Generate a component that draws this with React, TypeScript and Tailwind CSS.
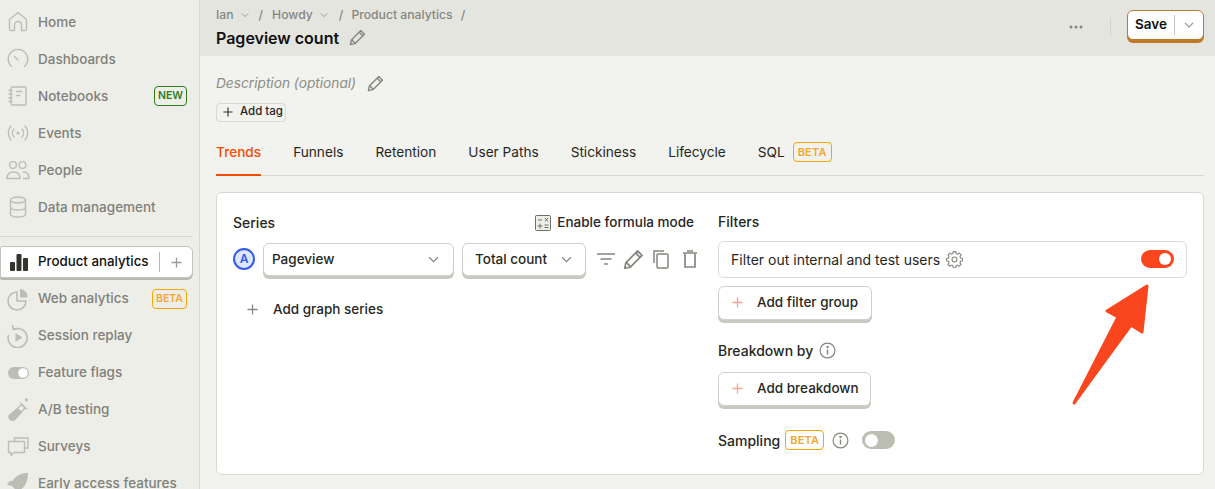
import React from "react";

const S = ({ children, size = 24, className = "text-[#bcbdb3]" }: any) => (
  <svg width={size} height={size} viewBox="0 0 24 24" fill="none" stroke="currentColor" strokeWidth={1.4} strokeLinecap="round" strokeLinejoin="round" className={`shrink-0 ${className}`}>
    {children}
  </svg>
);

const Pencil = ({ className = "", size = 18 }: any) => (
  <svg width={size} height={size} viewBox="0 0 18 18" fill="none" stroke="currentColor" strokeWidth={1.5} strokeLinejoin="round" className={`shrink-0 ${className}`}>
    <path d="M1.500 16.500l1-4.800L12.500 1.700 16.300 5.500 6.300 15.500z" />
    <path d="M10.800 3.400l3.800 3.800M2.800 11.500l3.700 3.700" />
  </svg>
);

const Plus = ({ className = "", size = 12 }: any) => (
  <svg width={size} height={size} viewBox="0 0 12 12" stroke="currentColor" strokeWidth={1.4} className={`shrink-0 ${className}`}>
    <path d="M6 0.500v11M0.500 6h11" />
  </svg>
);

const Chev = ({ className = "", size = 10 }: any) => (
  <svg width={size} height={size} viewBox="0 0 10 10" fill="none" stroke="currentColor" strokeWidth={1.1} className={`shrink-0 ${className}`}>
    <path d="M1 3l4 4 4-4" />
  </svg>
);

const Info = ({ className = "" }: any) => (
  <svg width="17" height="17" viewBox="0 0 17 17" fill="none" stroke="currentColor" strokeWidth={1.2} className={`shrink-0 ${className}`}>
    <circle cx="8.500" cy="8.500" r="7.400" />
    <path d="M8.500 7.500v5" strokeWidth={1.500} />
    <circle cx="8.500" cy="5" r="0.600" fill="currentColor" />
  </svg>
);

const Badge = ({ children, green = false, small = false }: any) => (
  <span className={`flex h-[20px] items-center rounded-[4px] border font-semibold ${small ? "px-[3px] text-[10.500px]" : "px-[4px] text-[11px] tracking-[0.2px]"} ${green ? "border-[#2f7d1f] text-[#2f7d1f]" : "border-[#f7a501] text-[#f7a530]"}`}>
    {children}
  </span>
);

const icons: Record<string, React.ReactNode> = {
  Home: <S><path d="M3.500 9.500L12 2.500l8.500 7v9.500a1.500 1.500 0 0 1-1.500 1.500h-3.500V15a3.500 3.500 0 0 0-7 0v5.500H5A1.500 1.500 0 0 1 3.500 19z" /></S>,
  Dashboards: <S><path d="M5.500 19.500a9.800 9.800 0 1 1 13 0" /><path d="M8.500 9.500l3.500 3.500" /></S>,
  Notebooks: <S><rect x="5" y="3" width="15" height="18" rx="1.500" /><path d="M3 6.500h3M3 10h3M3 14h3M3 17.500h3M10.500 7.500h5.500M10.500 11.500h3.500" /></S>,
  Events: <S><path d="M5 5a10.500 10.500 0 0 0 0 14M19 5a10.500 10.500 0 0 1 0 14M8 8a6 6 0 0 0 0 8M16 8a6 6 0 0 1 0 8" /><circle cx="12" cy="12" r="0.900" fill="currentColor" /></S>,
  People: <S><circle cx="7" cy="7" r="3.400" /><circle cx="16.500" cy="7" r="3.400" /><path d="M1 20.500c0-4 2.500-6.500 6.500-6.500s6.500 2.500 6.500 6.500zM17.500 14c3.500 0 5.500 2.500 5.500 6.500h-5.500" /></S>,
  "Data management": <S><ellipse cx="12" cy="5" rx="7.500" ry="3" /><path d="M4.500 5v14c0 1.700 3.400 3 7.500 3s7.500-1.300 7.500-3V5M4.500 12c0 1.700 3.400 3 7.500 3s7.500-1.300 7.500-3" /></S>,
  "Web analytics": <S><path d="M11 5a9 9 0 1 0 9 9h-9z" strokeWidth={1.600} /><path d="M14 2a7.500 7.500 0 0 1 7.500 8.500H14z" fill="currentColor" stroke="none" /></S>,
  "Session replay": <S><path d="M7.500 5.500a9.500 9.500 0 1 1-5 6" strokeWidth={1.600} /><path d="M6.500 1.500l1 4 4-1" strokeWidth={1.600} /><path d="M9.500 9l7 4.500-7 4.500z" fill="currentColor" stroke="none" /></S>,
  "Feature flags": <svg width="24" height="12" viewBox="0 0 24 12" className="shrink-0"><rect x="2" width="21" height="12" rx="6" fill="#bcbdb3" /><circle cx="17" cy="6" r="4.800" fill="#fff" /></svg>,
  "A/B testing": <S><path d="M16 6.500L4 17a3.200 3.200 0 0 0 4.500 4.500L19 10z" fill="none" /><path d="M11.500 11L4 17a3.200 3.200 0 0 0 4.500 4.500L15.500 14z" fill="currentColor" /><path d="M14.500 5l6 6" /><circle cx="20.500" cy="1.800" r="0.900" fill="currentColor" /></S>,
  Surveys: <S><path d="M8.500 6V3h13.500v10h-3.500" /><path d="M2.500 6.500h16v11H8l-3 3v-3H2.500z" /></S>,
  "Early access features": <svg width="24" height="24" viewBox="0 0 24 24" className="shrink-0 text-[#bcbdb3]" fill="currentColor"><path d="M22 1C15 1 10 3.500 7 8.500L3 9.500 1 13l5 1 4 4 1 5 3.500-2 1-4C20 13.500 22 8 22 1z" /></svg>,
};

const Row = ({ label, badge }: { label: string; badge?: React.ReactNode }) => (
  <div className="flex h-[37px] shrink-0 items-center pl-[6px] pr-[12px]">
    <span className="flex w-[32px] items-center">{icons[label]}</span>
    <span className="text-[13.500px] font-medium whitespace-nowrap text-[#80817a]">{label}</span>
    {badge && <span className="ml-auto">{badge}</span>}
  </div>
);

const Sidebar = () => (
  <aside className="flex w-[200px] shrink-0 flex-col border-r border-[#d9d9d3] bg-[#eeeee9] pt-[3.500px]">
    {["Home", "Dashboards"].map((l) => <Row key={l} label={l} />)}
    <Row label="Notebooks" badge={<Badge green small>NEW</Badge>} />
    {["Events", "People", "Data management"].map((l) => <Row key={l} label={l} />)}
    <div className="mt-[10px] mb-[7.500px] mr-[6px] h-px shrink-0 bg-[#d9d9d3]" />
    <div className="flex h-[36px] shrink-0 items-center">
      <div className="flex h-[32px] w-[193px] items-center rounded-r-[6px] rounded-l-[2px] border border-[#c4c4bd] bg-white pl-[8px] shadow-[0_2px_0_#b8b8b1]">
        <svg width="20" height="20" viewBox="0 0 20 20" fill="#33342f" className="mr-[9px] shrink-0">
          <rect x="1" y="10" width="5" height="9" rx="1" /><rect x="7.500" y="2" width="5" height="17" rx="1" /><rect x="14" y="6" width="5" height="13" rx="1" />
        </svg>
        <span className="text-[13.300px] font-medium whitespace-nowrap text-[#111]">Product analytics</span>
        <span className="ml-[10px] h-[20px] w-px bg-[#b8b8b1]" />
        <Plus className="ml-[11px] text-[#9a9b92]" size={11} />
      </div>
    </div>
    <Row label="Web analytics" badge={<Badge small>BETA</Badge>} />
    {["Session replay", "Feature flags", "A/B testing", "Surveys", "Early access features"].map((l) => <Row key={l} label={l} />)}
  </aside>
);

const Crumb = ({ children, chev }: any) => (
  <span className="flex items-center text-[#86877f]">
    {children}
    {chev && <Chev size={8} className="ml-[7px] text-[#909188]" />}
  </span>
);

const Header = () => (
  <header className="flex h-[56px] shrink-0 items-center bg-[#e5e5e0] pl-[16px] pr-[11px]">
    <div className="flex flex-col">
      <div className="flex items-center text-[12.200px] font-medium">
        <Crumb chev>Ian</Crumb>
        <span className="ml-[10px] mr-[9px] text-[#86877f]">/</span>
        <Crumb chev>Howdy</Crumb>
        <span className="ml-[11px] mr-[8px] text-[#86877f]">/</span>
        <Crumb>Product analytics</Crumb>
        <span className="ml-[8px] text-[#86877f]">/</span>
      </div>
      <div className="mt-[1px] flex items-center text-[16px] font-semibold text-[#111]">
        Pageview count
        <Pencil className="ml-[10px] text-[#86877f]" size={17} />
      </div>
    </div>
    <div className="ml-auto flex items-center">
      <svg width="14" height="4" viewBox="0 0 14 4" fill="#86877f" className="-mt-[2px]"><circle cx="2" cy="2" r="1.500" /><circle cx="7" cy="2" r="1.500" /><circle cx="12" cy="2" r="1.500" /></svg>
      <span className="-mt-[3px] ml-[27px] mr-[16px] h-[18px] w-px bg-[#d4d4ce]" />
      <div className="-mt-[7px] flex h-[30px] w-[77px] items-center rounded-[6px] border border-[#b97a2e] bg-white shadow-[0_3px_0_#c07a26]">
        <span className="w-[46px] text-center text-[13.500px] font-semibold text-[#111]">Save</span>
        <span className="h-[20px] w-px bg-[#c4c4bd]" />
        <Chev size={10} className="ml-[9px] text-[#9a9b92]" />
      </div>
    </div>
  </header>
);

const tabs = ["Funnels", "Retention", "User Paths", "Stickiness", "Lifecycle"];

const Tabs = () => (
  <div className="mt-[16px] flex h-[38px] items-start gap-[32px] border-b border-[#d9d9d3] pt-[4px] text-[13.650px] text-[#26271f]">
    <span className="-mb-px flex h-[34px] items-start border-b-2 border-[#f54e00] font-medium text-[#f54e00]">Trends</span>
    {tabs.map((t) => <span key={t}>{t}</span>)}
    <span className="flex items-center">SQL <span className="ml-[8px]"><Badge>BETA</Badge></span></span>
  </div>
);

const Select = ({ label, w, tw }: any) => (
  <div className={`flex h-[33px] shrink-0 items-center justify-between rounded-[6px] border border-[#d0d0c9] bg-white shadow-[0_3px_0_#c9c9c3] ${w} ${tw}`}>
    <span className="text-[13.500px] font-medium text-[#26271f]">{label}</span>
    <Chev size={11} className="text-[#86877f]" />
  </div>
);

const Series = () => (
  <div className="flex w-[461px] shrink-0 flex-col">
    <div className="flex h-[30px] items-center justify-between">
      <span className="text-[14px] font-medium text-[#26271f]">Series</span>
      <span className="flex items-center text-[13.500px] font-medium text-[#26271f]">
        <svg width="16" height="16" viewBox="0 0 16 16" fill="#eeeee9" stroke="#6f7069" strokeWidth={1} className="mr-[6px]">
          <rect x="0.500" y="0.500" width="15" height="15" rx="1" />
          <path d="M3 5h4M10 3l3 3.500M13 3l-3 3.500M2.500 11h5M5 8.500v5M9.500 10h4M9.500 12.500h4" fill="none" />
        </svg>
        Enable formula mode
      </span>
    </div>
    <div className="mt-[5px] flex items-center">
      <span className="flex h-[22px] w-[22px] shrink-0 items-center justify-center rounded-full border-2 border-[#2f5bf0] bg-[#dfe5fb] text-[12px] font-semibold text-[#2f5bf0]">A</span>
      <Select label="Pageview" w="ml-[8px] w-[191px]" tw="pl-[8px] pr-[14px]" />
      <Select label="Total count" w="ml-[8px] w-[124px]" tw="pl-[12px] pr-[13px]" />
      <svg width="20" height="20" viewBox="0 0 20 20" stroke="#86877f" strokeWidth={1.400} className="ml-[10px] shrink-0"><path d="M1 5h18M4.500 10h11M8 15h4" /></svg>
      <Pencil className="ml-[7px] text-[#86877f]" size={21} />
      <svg width="18" height="20" viewBox="0 0 18 20" fill="none" stroke="#86877f" strokeWidth={1.500} className="ml-[8px] shrink-0"><path d="M2 14V2h10" /><rect x="5" y="5" width="11" height="14" rx="1" /></svg>
      <svg width="16" height="20" viewBox="0 0 16 20" fill="none" stroke="#86877f" strokeWidth={1.700} className="ml-[12px] shrink-0"><path d="M1 4h14M5 2h6" /><path d="M3 5v13h10V5" /></svg>
    </div>
    <div className="mt-[22px] flex h-[24px] items-center pl-[14px] text-[13.500px] font-medium text-[#26271f]">
      <Plus className="text-[#86877f]" size={11} />
      <span className="ml-[15px]">Add graph series</span>
    </div>
  </div>
);

const AddBtn = ({ label, w }: any) => (
  <div className={`flex h-[34px] items-center rounded-[6px] border border-[#d0d0c9] bg-white pl-[13px] shadow-[0_3px_0_#c9c9c3] ${w}`}>
    <Plus className="text-[#f7a594]" size={11} />
    <span className="ml-[14px] text-[13.500px] font-medium text-[#26271f]">{label}</span>
  </div>
);

const Filters = () => (
  <div className="flex flex-1 flex-col">
    <span className="flex h-[28px] items-center text-[14px] font-medium text-[#26271f]">Filters</span>
    <div className="mt-[5px] flex h-[37px] items-center justify-between rounded-[6px] border border-[#dcdcd5] pl-[12px] pr-[12px]">
      <span className="flex items-center text-[14px] text-[#26271f]">
        Filter out internal and test users
        <svg width="17" height="17" viewBox="0 0 24 24" fill="none" stroke="#86877f" strokeWidth={1.600} className="ml-[6px]">
          <circle cx="12" cy="12" r="3.500" />
          <path d="M10.300 2h3.400l.6 2.800 2.100.9 2.400-1.500 2.400 2.400-1.500 2.400.9 2.100 2.800.6v3.400l-2.800.6-.9 2.100 1.500 2.400-2.400 2.400-2.400-1.500-2.100.9-.6 2.800h-3.400l-.6-2.800-2.100-.9-2.400 1.500-2.400-2.400 1.500-2.400-.9-2.100-2.800-.6v-3.400l2.800-.6.9-2.100-1.500-2.400 2.400-2.400 2.400 1.500 2.100-.9z" transform="translate(0 -1.200)" />
        </svg>
      </span>
      <span className="flex h-[18px] w-[33px] items-center justify-end rounded-full bg-[#f9461e] pr-[3px]">
        <span className="h-[12px] w-[12px] rounded-full bg-white" />
      </span>
    </div>
    <div className="mt-[8px] self-start"><AddBtn label="Add filter group" w="w-[154px]" /></div>
    <div className="mt-[21px] flex h-[20px] items-center text-[14px] font-medium text-[#26271f]">
      Breakdown by
      <Info className="ml-[6px] text-[#86877f]" />
    </div>
    <div className="mt-[11px] self-start"><AddBtn label="Add breakdown" w="w-[153px]" /></div>
    <div className="mt-[24px] flex items-center text-[14px] font-medium text-[#26271f]">
      Sampling
      <span className="ml-[5px]"><Badge>BETA</Badge></span>
      <Info className="ml-[8px] text-[#86877f]" />
      <span className="ml-[13px] flex h-[18px] w-[33px] items-center rounded-full bg-[#bcbdb3] pl-[3px]">
        <span className="h-[13px] w-[13px] rounded-full bg-white" />
      </span>
    </div>
  </div>
);

export default function App() {
  return (
    <div className="relative flex h-[489px] w-[1215px] overflow-hidden bg-[#f2f2ee] font-['Inter',sans-serif]">
      <Sidebar />
      <main className="flex min-w-0 flex-1 flex-col">
        <Header />
        <div className="flex flex-col px-[16px] pr-[11px]">
          <div className="mt-[17px] flex items-center text-[13.700px] text-[#8c8d85] italic">
            Description (optional)
            <Pencil className="ml-[11px] text-[#86877f]" size={17} />
          </div>
          <div className="mt-[9px] flex h-[19px] w-[70px] items-center rounded-[4px] border border-[#d9d9d3] pl-[6px] text-[11.500px] font-medium text-[#26271f]">
            <Plus className="mr-[7px] text-[#33342f]" size={10} />
            Add tag
          </div>
          <Tabs />
          <div className="mt-[16px] flex h-[283px] gap-[24px] rounded-[6px] border border-[#d9d9d3] bg-white px-[16px] pt-[15px]">
            <Series />
            <Filters />
          </div>
        </div>
      </main>
      <svg width="90" height="135" viewBox="0 0 90 135" className="absolute left-[1066px] top-[278px]">
        <path d="M81 8L41 33L52 39L8 125L65 47L76 54Z" fill="#f9461e" stroke="#f9461e" strokeWidth={3} strokeLinejoin="round" />
      </svg>
    </div>
  );
}
